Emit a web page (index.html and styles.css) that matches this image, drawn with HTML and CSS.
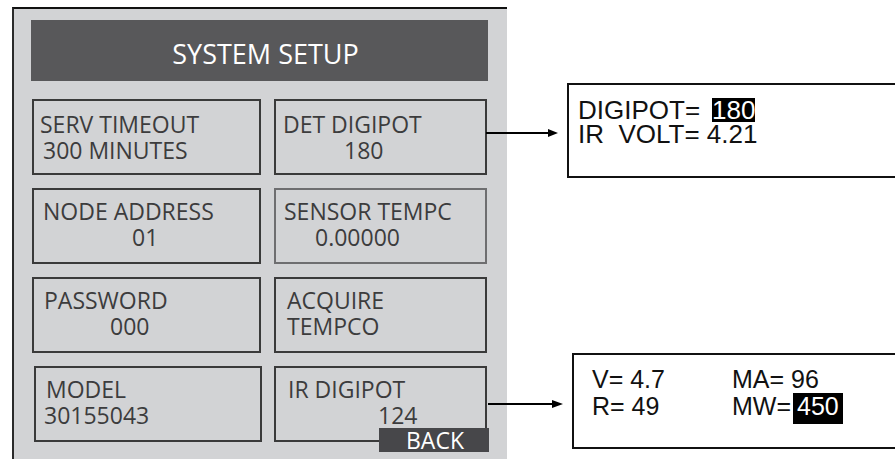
FILE: index.html
```html
<!DOCTYPE html>
<html lang="en">
<head>
<meta charset="utf-8">
<title>System Setup</title>
<link rel="stylesheet" href="styles.css">
</head>
<body>
<div class="panel">
  <div class="header">SYSTEM SETUP</div>
  <div class="grid">
    <div class="btn left top">
      <div class="ln">SERV TIMEOUT</div>
      <div class="ln in-3">300 MINUTES</div>
    </div>
    <div class="btn right top">
      <div class="ln in-1">DET DIGIPOT</div>
      <div class="ln in-62">180</div>
    </div>
    <div class="btn left">
      <div class="ln in-3">NODE ADDRESS</div>
      <div class="ln in-92">01</div>
    </div>
    <div class="btn right light">
      <div class="ln in-2">SENSOR TEMPC</div>
      <div class="ln in-33">0.00000</div>
    </div>
    <div class="btn left">
      <div class="ln in-4">PASSWORD</div>
      <div class="ln in-70">000</div>
    </div>
    <div class="btn right">
      <div class="ln in-5">ACQUIRE</div>
      <div class="ln in-5">TEMPCO</div>
    </div>
    <div class="btn left shift">
      <div class="ln in-4">MODEL</div>
      <div class="ln in-2">30155043</div>
    </div>
    <div class="btn right has-back">
      <div class="ln in-6">IR DIGIPOT</div>
      <div class="ln in-96">124</div>
      <div class="back">BACK</div>
    </div>
  </div>
</div>
<div class="side">
  <div class="lcd lcd1">
    <div class="row">DIGIPOT=<span class="hl">180</span></div>
    <div class="row">IR&nbsp; VOLT= 4.21</div>
  </div>
  <div class="lcd lcd2">
    <div class="cell">V= 4.7</div>
    <div class="cell">MA= 96</div>
    <div class="cell">R= 49</div>
    <div class="cell mw">MW=<span class="hl hl2">450</span></div>
  </div>
</div>
<svg class="arrow arrow1" width="74" height="10" viewBox="0 0 74 10">
  <line x1="0" y1="5" x2="64" y2="5" stroke="#000" stroke-width="2"/>
  <polygon points="62,1 72,5 62,9" fill="#000"/>
</svg>
<svg class="arrow arrow2" width="78" height="10" viewBox="0 0 78 10">
  <line x1="0" y1="5" x2="66" y2="5" stroke="#000" stroke-width="2"/>
  <polygon points="64,1 75,5 64,9" fill="#000"/>
</svg>
</body>
</html>
```

FILE: styles.css
```css
* { box-sizing: border-box; }

html, body {
  margin: 0;
  height: 100%;
  overflow: hidden;
  background: #ffffff;
}

body {
  position: relative;
  display: flex;
  padding: 7px 0 0 12px;
}

.panel {
  width: 495px;
  height: 452px;
  flex: none;
  background: #d2d3d5;
  border-top: 2px solid #111;
  border-left: 2px solid #2a2a2a;
  padding: 11px 0 0 17px;
  font-family: "Open Sans", "Liberation Sans", sans-serif;
}

.header {
  width: 457px;
  height: 61px;
  background: #58585a;
  color: #ffffff;
  font-size: 27px;
  line-height: 54px;
  padding: 7px 0 0 12px;
  text-align: center;
}

.grid {
  margin: 18px 0 0 1px;
  display: grid;
  grid-template-columns: 229px 213px;
  grid-auto-rows: 76px;
  column-gap: 13px;
  row-gap: 13px;
}

.btn {
  position: relative;
  border: 2px solid #3a3a3a;
  padding: 8px 0 0 6px;
  color: #3c3c3d;
  font-size: 23px;
  line-height: 26px;
  white-space: nowrap;
}

.btn.top { padding-top: 10px; }
.btn.light { border-color: #6e6e70; }
.btn.shift { margin-left: 2px; width: 228px; }

.in-1 { padding-left: 1px; }
.in-2 { padding-left: 2px; }
.in-3 { padding-left: 3px; }
.in-4 { padding-left: 4px; }
.in-5 { padding-left: 5px; }
.in-6 { padding-left: 6px; }
.in-33 { padding-left: 33px; }
.in-62 { padding-left: 62px; }
.in-70 { padding-left: 70px; }
.in-92 { padding-left: 92px; }
.in-96 { padding-left: 96px; }

.back {
  position: absolute;
  right: -4px;
  bottom: -12px;
  width: 110px;
  height: 24px;
  background: #47474a;
  color: #ffffff;
  font-size: 23px;
  font-weight: 500;
  line-height: 24px;
  text-align: center;
  padding-left: 2px;
}

.side {
  flex: 1;
  display: flex;
  flex-direction: column;
  font-family: "Liberation Sans", Arial, sans-serif;
  color: #111;
}

.lcd {
  border: 2px solid #111;
  border-right: none;
  white-space: nowrap;
}

.lcd1 {
  margin: 76px 0 0 60px;
  height: 95px;
  font-size: 26px;
  line-height: 24px;
  padding: 13px 0 0 9px;
}

.lcd1 .row { height: 24px; }

.hl {
  display: inline-block;
  background: #000;
  color: #fff;
  line-height: 24px;
  height: 24px;
  margin-left: 12px;
}

.lcd2 {
  margin: 175px 0 0 65px;
  height: 96px;
  font-size: 25px;
  line-height: 27px;
  padding: 11px 0 0 18px;
  display: grid;
  grid-template-columns: 140px auto;
  grid-auto-rows: 27px;
  align-content: start;
}

.hl2 {
  line-height: 27px;
  height: 31px;
  padding: 0 4px 4px 4px;
  margin-left: 2px;
}

.arrow {
  position: absolute;
}

.arrow1 { left: 486px; top: 128px; }
.arrow2 { left: 488px; top: 399px; }
```
